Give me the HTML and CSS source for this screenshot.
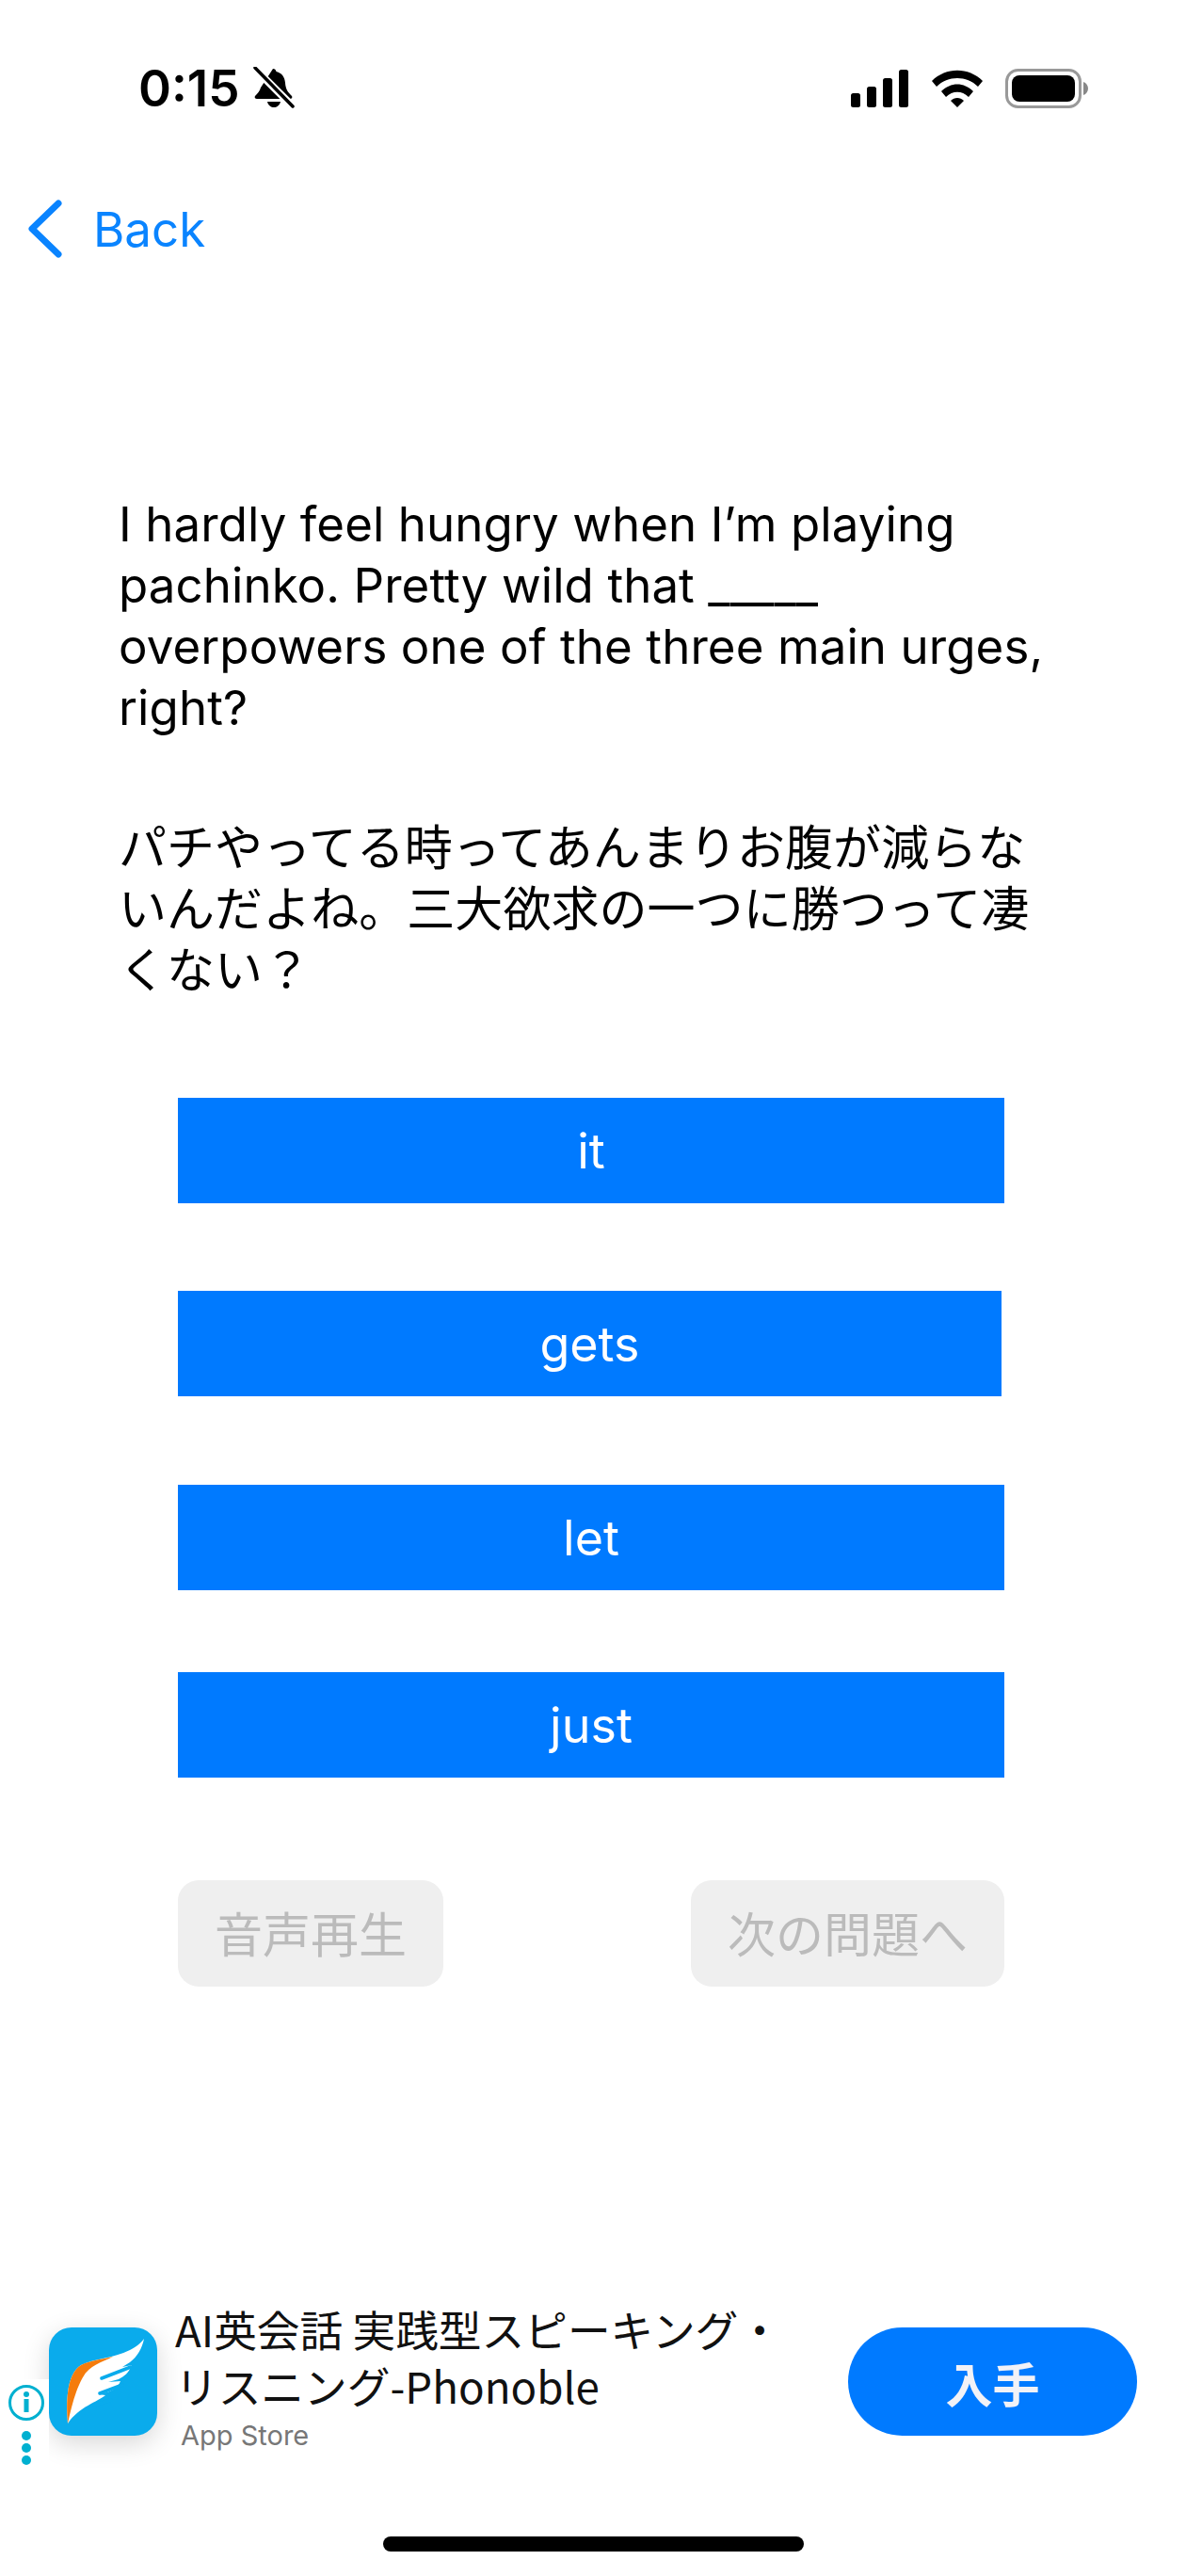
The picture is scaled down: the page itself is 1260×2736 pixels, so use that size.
FILE: index.html
```html
<!DOCTYPE html>
<html lang="ja">
<head>
<meta charset="utf-8">
<title>Quiz</title>
<link rel="stylesheet" href="styles.css">
</head>
<body>
<div class="screen">
  <header class="status">
    <div class="status-left">
      <span class="time">0:15</span>
      <svg class="bell" width="44" height="46" viewBox="0 0 44 46">
        <path d="M21 2c2 0 3 1 3.500 3 6 1.500 9 6 9.500 12 .5 7 3 10 7 14 1 1.500 0 3-2 3H4c-2 0-3-1.500-2-3 3-3 5-5.500 6-9z" fill="#000"/>
        <path d="M15 37h14c-1 4-4 6-7 6s-6-2-7-6z" fill="#000"/>
        <path d="M2 2l40 40" stroke="#fff" stroke-width="8"/>
        <path d="M2 1l40 41" stroke="#000" stroke-width="3.500" stroke-linecap="round"/>
      </svg>
    </div>
    <div class="status-right">
      <svg width="62" height="40" viewBox="0 0 62 40"><rect x="0" y="25" width="10" height="15" rx="2.500"/><rect x="17" y="18" width="10" height="22" rx="2.500"/><rect x="34" y="9" width="10" height="31" rx="2.500"/><rect x="51" y="0" width="10" height="40" rx="2.500"/></svg>
      <svg width="54" height="40" viewBox="0 0 54 40"><path d="M0 12C15-3 39-3 54 12l-5 6C37 6 17 6 5 18z"/><path d="M10 23c10-10 24-10 34 0l-5 6c-7-7-17-7-24 0z"/><path d="M20 33c4-4 10-4 14 0l-7 7z"/></svg>
      <svg width="88" height="42" viewBox="0 0 88 42"><rect x="1.500" y="1.500" width="78" height="39" rx="12" fill="none" stroke="#999" stroke-width="3"/><rect x="7" y="7" width="67" height="28" rx="8"/><path d="M83 14c3 1 5 4 5 7s-2 6-5 7z" fill="#888"/></svg>
    </div>
  </header>

  <nav class="nav">
    <svg class="chevron" width="38" height="62" viewBox="0 0 38 62"><path d="M33 4L5 31l28 27" fill="none" stroke="#0a84ff" stroke-width="7" stroke-linecap="round" stroke-linejoin="round"/></svg>
    <span class="back">Back</span>
  </nav>

  <main class="content">
    <p class="question">I hardly feel hungry when I’m playing pachinko. Pretty wild that _____ overpowers one of the three main urges, right?</p>
    <p class="translation">パチやってる時ってあんまりお腹が減らないんだよね。三大欲求の一つに勝つって凄くない？</p>

    <div class="choices">
      <button class="choice choice-it">it</button>
      <button class="choice choice-gets">gets</button>
      <button class="choice choice-let">let</button>
      <button class="choice choice-just">just</button>
    </div>

    <div class="actions">
      <button class="action action-play">音声再生</button>
      <button class="action action-next">次の問題へ</button>
    </div>
  </main>

  <aside class="ad">
    <div class="ad-marks">
      <svg width="40" height="40" viewBox="0 0 40 40"><circle cx="20" cy="20" r="17.500" fill="none" stroke="#00b0d0" stroke-width="3"/><rect x="17.500" y="16" width="5" height="14" fill="#00b0d0"/><circle cx="20" cy="11" r="3" fill="#00b0d0"/></svg>
      <span class="dots"><i></i><i></i><i></i></span>
    </div>
    <div class="ad-icon">
      <svg width="116" height="116" viewBox="0 0 116 116">
        <path d="M20 102C17 70 22 47 34 40c14-7 34-7 52-16 8-4 12-8 15-12-2 10-7 19-15 25l-8 5 10-2c-3 8-8 12-14 15l-11 3 13-1c-3 7-8 10-15 12l-9 2 8 1c-8 7-28 12-40 30z" fill="#fff"/>
        <path d="M20 102C17 70 22 47 34 40c10-5 22-6 34-9-12 6-25 9-32 22-7 12-12 30-16 49z" fill="#f57c0c"/>
        <path d="M56 54l31-12M54 70l24-9M48 83l18-6" stroke="#0aabec" stroke-width="3.500" fill="none" stroke-linecap="round"/>
      </svg>
    </div>
    <div class="ad-text">
      <div class="ad-title">AI英会話 実践型スピーキング・<br>リスニング-Phonoble</div>
      <div class="ad-store">App Store</div>
    </div>
    <button class="ad-get">入手</button>
  </aside>

  <div class="home-bar"></div>
</div>
</body>
</html>
```

FILE: styles.css
```css
* { box-sizing: border-box; }
html, body { margin: 0; padding: 0; background: #fff; }
body { font-family: Inter, "Noto Sans CJK JP", sans-serif; color: #000; }
.screen { width: 1260px; height: 2736px; display: flex; flex-direction: column; position: relative; overflow: hidden; }

.status { height: 183px; padding: 69px 104px 0 147px; display: flex; justify-content: space-between; align-items: flex-start; }
.status-left { display: flex; align-items: center; gap: 14px; }
.time { font: 600 53px/50px Inter, sans-serif; }
.status-right { display: flex; align-items: center; gap: 24px; margin-top: 4px; }

.nav { height: 120px; display: flex; align-items: center; padding: 0 0 0 29px; gap: 32px; }
.back { font-size: 51px; color: #0a84ff; }

.content { flex: 1; display: flex; flex-direction: column; padding: 221px 0 0; }
.question, .translation { margin: 0 0 0 126px; width: 1008px; font-size: 51px; line-height: 65px; }
.question { height: 260px; letter-spacing: .09px; }
.translation { margin-top: 84px; height: 195px; letter-spacing: .05px; }

.choices { margin: 103px 0 0 189px; display: flex; flex-direction: column; }
.choice { border: 0; background: #007aff; color: #fff; font: 400 52px Inter, sans-serif; height: 112px; width: 878px; padding: 0; }
.choice-gets { margin-top: 93px; width: 875px; }
.choice-let { margin-top: 94px; }
.choice-just { margin-top: 87px; }

.actions { margin: 109px 0 0 189px; width: 878px; display: flex; justify-content: space-between; }
.action { border: 0; background: #efefef; color: #bbb; font: 400 51px/1 "Noto Sans CJK JP", sans-serif; height: 113px; border-radius: 22px; padding: 0 0 3px; }
.action-play { width: 282px; }
.action-next { width: 333px; }

.ad { position: absolute; left: 0; top: 2472px; width: 1260px; height: 115px; display: flex; align-items: flex-start; }
.ad-marks { position: absolute; z-index: 1; left: 0; top: 55px; width: 52px; height: 95px; padding: 5px 5px 0 8px; background: #fff; display: flex; flex-direction: column; align-items: center; gap: 10px; }
.dots { display: flex; flex-direction: column; gap: 3px; }
.dots i { width: 10px; height: 10px; border-radius: 50%; background: #00b0d0; display: block; }
.ad-icon { margin-left: 52px; width: 115px; height: 115px; border-radius: 24px; background: #0aabec; box-shadow: 0 8px 28px rgba(0,0,0,.16); overflow: hidden; flex: none; }
.ad-text { margin: -29px 0 0 19px; width: 700px; }
.ad-title { font: 400 45.700px/60px "Noto Sans CJK JP", sans-serif; color: #111; }
.ad-store { font: 400 29px/48px Inter, sans-serif; color: #777; margin: 0 0 0 6px; }
.ad-get { position: absolute; left: 901px; top: 0; width: 307px; height: 115px; border: 0; border-radius: 58px; background: #007aff; color: #f2f2f7; font: 700 50px "Noto Sans CJK JP", sans-serif; padding: 0; }

.home-bar { position: absolute; left: 407px; top: 2694px; width: 447px; height: 16px; border-radius: 8px; background: #000; }
```
